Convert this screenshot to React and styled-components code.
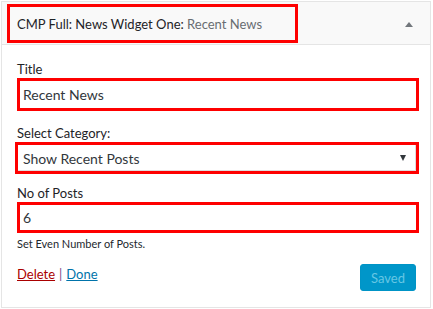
import styled, { createGlobalStyle } from "styled-components";

const GlobalStyle = createGlobalStyle`
  body {
    margin: 0;
    background: #fff;
    font-family: "Segoe UI", Lato, "Open Sans", sans-serif;
    color: #23282d;
  }
`;

function App() {
  return (
    <>
      <GlobalStyle />
      <Widget>
        <Header>
          <TitleBox>
            CMP Full: News Widget One:<TitleSub> Recent News</TitleSub>
          </TitleBox>
          <Toggle />
        </Header>
        <Body>
          <Field $gap={13}>
            <Label>Title</Label>
            <TextInput $h={33} defaultValue="Recent News" />
          </Field>
          <Field $gap={10}>
            <Label>Select Category:</Label>
            <SelectBox>
              <span>Show Recent Posts</span>
              <Caret />
            </SelectBox>
          </Field>
          <Field $gap={13}>
            <Label>No of Posts</Label>
            <TextInput $h={31} defaultValue="6" />
            <Hint>Set Even Number of Posts.</Hint>
          </Field>
          <Actions>
            <Links>
              <DeleteLink href="#">Delete</DeleteLink>
              <Pipe>|</Pipe>
              <DoneLink href="#">Done</DoneLink>
            </Links>
            <SaveButton disabled>Saved</SaveButton>
          </Actions>
        </Body>
      </Widget>
    </>
  );
}

export default App;

/* ------- Styled Components ------- */

const Widget = styled.div`
  margin: 1px 0 0 1px;
  width: 430px;
  height: 307px;
  box-sizing: border-box;
  border: 1px solid #e5e5e5;
  background: #fff;
`;

const Header = styled.div`
  height: 43px;
  box-sizing: border-box;
  padding: 2px 0 0 5px;
  background: #f9f9f9;
  border-bottom: 1px solid #e5e5e5;
  display: flex;
  align-items: flex-start;
  justify-content: space-between;
`;

const TitleBox = styled.div`
  width: 291px;
  height: 39px;
  box-sizing: border-box;
  border: 3px solid #fe0000;
  padding-left: 7px;
  display: flex;
  align-items: center;
  font-size: 13px;
  white-space: pre;
  color: #1e2327;
`;

const TitleSub = styled.span`
  color: #686d72;
`;

const Toggle = styled.span`
  width: 0;
  height: 0;
  margin: 18px 17px 0 0;
  border-left: 4px solid transparent;
  border-right: 4px solid transparent;
  border-bottom: 5px solid #72777c;
`;

const Body = styled.div`
  padding: 15px 11px 0 15px;
  display: flex;
  flex-direction: column;
`;

const Field = styled.div`
  display: flex;
  flex-direction: column;
  margin-bottom: ${({ $gap }) => $gap}px;
`;

const Label = styled.label`
  font-size: 13px;
  line-height: 18px;
  color: #1e2327;
`;

const TextInput = styled.input`
  box-sizing: border-box;
  width: 402px;
  height: ${({ $h }) => $h}px;
  border: 3px solid #fe0000;
  margin: 0;
  padding: 0 0 0 3px;
  font-family: inherit;
  font-size: 14px;
  color: #32373c;
  background: #fff;
  outline: none;
`;

const SelectBox = styled.div`
  box-sizing: border-box;
  width: 404px;
  height: 32px;
  margin-left: -2px;
  border: 3px solid #fe0000;
  box-shadow: inset -1px -1px 0 #ddd;
  padding: 0 10px 0 5px;
  display: flex;
  align-items: center;
  justify-content: space-between;
  font-size: 14px;
  color: #32373c;
`;

const Caret = styled.span`
  width: 0;
  height: 0;
  border-left: 3.5px solid transparent;
  border-right: 3.5px solid transparent;
  border-top: 6px solid #32373c;
`;

const Hint = styled.div`
  font-size: 11px;
  line-height: 15px;
  margin-top: 3px;
  color: #23282d;
`;

const Actions = styled.div`
  display: flex;
  justify-content: space-between;
  align-items: flex-start;
  padding-right: 3px;
`;

const Links = styled.div`
  font-size: 13px;
  line-height: 18px;
  padding-top: 1px;
  display: flex;
  gap: 4px;
`;

const DeleteLink = styled.a`
  color: #a00;
  text-decoration: underline;
`;

const DoneLink = styled.a`
  color: #0073aa;
  text-decoration: underline;
`;

const Pipe = styled.span`
  color: #7a4a88;
`;

const SaveButton = styled.button`
  width: 56px;
  height: 27px;
  border: 1px solid #0094c6;
  border-radius: 3px;
  background: #0096c9;
  color: #66c6e4;
  font-family: inherit;
  font-size: 13px;
  padding: 0;
  cursor: default;
`;
